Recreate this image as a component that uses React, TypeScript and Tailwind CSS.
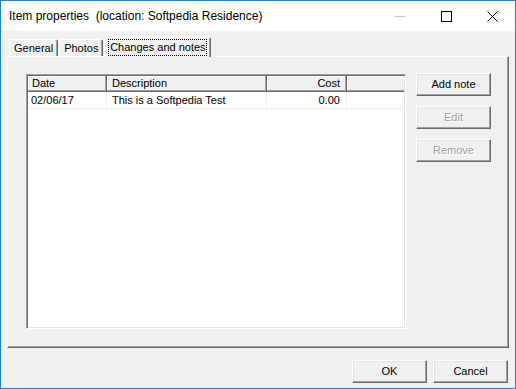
import React from "react";

const raised =
  "border border-t-white border-l-white border-r-[#696969] border-b-[#696969] shadow-[inset_-1px_-1px_0_#a0a0a0,inset_1px_1px_0_#e3e3e3]";

const Button = ({ label, disabled }: { label: string; disabled?: boolean }) => (
  <div
    className={`${raised} w-[75px] h-[23px] flex items-center justify-center bg-[#f0f0f0] ${
      disabled ? "text-[#a0a0a0] [text-shadow:1px_1px_0_#fff]" : "text-black"
    }`}
  >
    {label}
  </div>
);

const Tab = ({ label, active }: { label: string; active?: boolean }) =>
  active ? (
    <div className="relative z-10 -mb-px h-[20px] w-[107px] bg-[#f0f0f0] border-l border-t border-l-white border-t-white border-r border-r-[#696969] shadow-[inset_-1px_0_0_#a0a0a0] rounded-tl-[2px] rounded-tr-[2px] flex items-start justify-center pt-[1px]">
      <span className="border border-dotted border-black h-[17px] leading-[15px] w-[99px] text-center whitespace-nowrap">
        {label}
      </span>
    </div>
  ) : (
    <div className="h-[17px] bg-[#f0f0f0] border-l border-t border-l-white border-t-white border-r border-r-[#696969] shadow-[inset_-1px_0_0_#a0a0a0] rounded-tl-[2px] rounded-tr-[2px] px-[4px] leading-[16px] whitespace-nowrap">
      {label}
    </div>
  );

const head =
  "h-[16px] leading-[15px] border-r border-b border-r-[#696969] border-b-[#696969] shadow-[inset_-1px_-1px_0_#a0a0a0,inset_1px_1px_0_#fff] bg-[#f0f0f0] whitespace-nowrap";
const cell = "h-[17px] leading-[16px] border-r border-b border-[#f0f0f0] whitespace-nowrap";

export default function App() {
  return (
    <div className="w-[516px] h-[389px] border border-[#1883d7] bg-[#f0f0f0] flex flex-col font-['Liberation_Sans',Arial,sans-serif] text-[11px] text-black select-none">
      {/* title bar */}
      <div className="h-[30px] bg-white flex items-center shrink-0">
        <div className="pl-[8px] text-[12px] whitespace-pre flex-1 pb-[1px]">
          Item properties  (location: Softpedia Residence)
        </div>
        <div className="flex h-full">
          <div className="w-[46px] flex items-center justify-center">
            <svg width="10" height="10" viewBox="0 0 10 10">
              <path d="M0 5.5h10" stroke="#c4c4c4" strokeWidth="1" />
            </svg>
          </div>
          <div className="w-[46px] flex items-center justify-center">
            <svg width="11" height="11" viewBox="0 0 11 11">
              <rect x="0.5" y="0.5" width="10" height="10" fill="none" stroke="#000" />
            </svg>
          </div>
          <div className="w-[46px] flex items-center justify-center">
            <svg width="11" height="11" viewBox="0 0 11 11">
              <path d="M0.5 0.5l10 10M10.5 0.5l-10 10" stroke="#000" strokeWidth="1" />
            </svg>
          </div>
        </div>
      </div>

      {/* body */}
      <div className="px-[6px] pt-[6px] flex flex-col">
        <div className="flex items-end gap-px pl-[2px] h-[19px]">
          <Tab label="General" />
          <Tab label="Photos" />
          <Tab label="Changes and notes" active />
        </div>

        <div className="h-[292px] border border-t-white border-l-white border-r-[#696969] border-b-[#696969] shadow-[inset_-1px_-1px_0_#a0a0a0] flex pl-[18px] pr-[17px] pt-[16px]">
          {/* list view */}
          <div className="mt-[1px] w-[380px] h-[255px] bg-white border border-t-[#a0a0a0] border-l-[#a0a0a0] border-r-white border-b-white shadow-[inset_1px_1px_0_#696969,inset_-1px_-1px_0_#e3e3e3] p-[1px]">
            <div className="grid grid-cols-[79px_160px_80px_1fr]">
              <div className={`${head} pl-[4px]`}>Date</div>
              <div className={`${head} pl-[5px]`}>Description</div>
              <div className={`${head} pr-[6px] text-right`}>Cost</div>
              <div className={`${head} border-r-0 shadow-[inset_0_-1px_0_#a0a0a0,inset_1px_1px_0_#fff]`} />

              <div className={`${cell} pl-[3px]`}>02/06/17</div>
              <div className={`${cell} pl-[5px]`}>This is a Softpedia Test</div>
              <div className={`${cell} pr-[6px] text-right`}>0.00</div>
              <div className={`${cell} border-r-0`} />
            </div>
          </div>

          <div className="ml-[10px] flex flex-col gap-[10px]">
            <Button label="Add note" />
            <Button label="Edit" disabled />
            <Button label="Remove" disabled />
          </div>
        </div>
      </div>

      {/* footer */}
      <div className="flex justify-end gap-[6px] pr-[7px] mt-[12px]">
        <Button label="OK" />
        <Button label="Cancel" />
      </div>
    </div>
  );
}
